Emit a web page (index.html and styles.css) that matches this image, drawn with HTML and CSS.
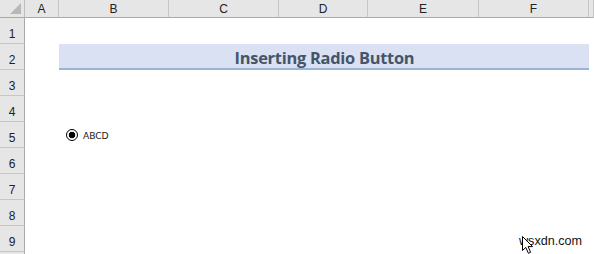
FILE: index.html
```html
<!DOCTYPE html>
<html>
<head>
<meta charset="utf-8">
<link rel="stylesheet" href="styles.css">
</head>
<body>
<div class="sheet">
  <div class="corner"><span class="tri"></span></div>
  <div class="ch">A</div><div class="ch">B</div><div class="ch">C</div><div class="ch">D</div><div class="ch">E</div><div class="ch">F</div><div class="ch last"></div>

  <div class="rh">1</div><div class="c"></div><div class="c"></div><div class="c"></div><div class="c"></div><div class="c"></div><div class="c"></div><div class="c"></div>
  <div class="rh">2</div><div class="c"></div><div class="title">Inserting Radio Button</div><div class="c"></div>
  <div class="rh">3</div><div class="c"></div><div class="c"></div><div class="c"></div><div class="c"></div><div class="c"></div><div class="c"></div><div class="c"></div>
  <div class="rh">4</div><div class="c"></div><div class="c"></div><div class="c"></div><div class="c"></div><div class="c"></div><div class="c"></div><div class="c"></div>
  <div class="rh">5</div><div class="c"></div><div class="c"><div class="radio"><span class="dot"></span><span class="lbl">ABCD</span></div></div><div class="c"></div><div class="c"></div><div class="c"></div><div class="c"></div><div class="c"></div>
  <div class="rh">6</div><div class="c"></div><div class="c"></div><div class="c"></div><div class="c"></div><div class="c"></div><div class="c"></div><div class="c"></div>
  <div class="rh">7</div><div class="c"></div><div class="c"></div><div class="c"></div><div class="c"></div><div class="c"></div><div class="c"></div><div class="c"></div>
  <div class="rh">8</div><div class="c"></div><div class="c"></div><div class="c"></div><div class="c"></div><div class="c"></div><div class="c"></div><div class="c"></div>
  <div class="rh">9</div><div class="c"></div><div class="c"></div><div class="c"></div><div class="c"></div><div class="c"></div><div class="c"></div><div class="c"></div>
  <div class="rh"></div><div class="c"></div><div class="c"></div><div class="c"></div><div class="c"></div><div class="c"></div><div class="c"></div><div class="c"></div>
</div>
<div class="watermark">wsxdn.com</div>
<svg class="cursor" width="14" height="20" viewBox="0 0 14 20">
  <path d="M1.5 1.5 L1.5 15.5 L4.8 12.4 L7.4 18.3 L9.6 17.3 L7.1 11.6 L11.6 11.6 Z" fill="#fff" stroke="#000" stroke-width="1" stroke-linejoin="miter"/>
</svg>
</body>
</html>
```

FILE: styles.css
```css
html, body {
  margin: 0;
  padding: 0;
  background: #fff;
  overflow: hidden;
}
body {
  width: 594px;
  height: 254px;
  position: relative;
  font-family: "Liberation Sans", Arial, sans-serif;
}
.sheet {
  display: grid;
  grid-template-columns: 25px 34px 110px 110px 89px 111px 110px 5px;
  grid-template-rows: 18px repeat(9, 26px) 2px;
  overflow: hidden;
}
.corner {
  background: #e6e6e6;
  border-right: 1px solid #bdbdbd;
  border-bottom: 1px solid #a9a9a9;
  position: relative;
  box-sizing: border-box;
}
.tri {
  position: absolute;
  right: 3px;
  bottom: 3px;
  width: 0;
  height: 0;
  border-left: 11px solid transparent;
  border-bottom: 11px solid #b8b8b8;
}
.ch {
  background: #e6e6e6;
  border-right: 1px solid #c6c6c6;
  border-bottom: 1px solid #a9a9a9;
  box-sizing: border-box;
  display: flex;
  align-items: center;
  justify-content: center;
  font-size: 12px;
  color: #222;
  padding-top: 1px;
}
.rh {
  background: #e6e6e6;
  border-right: 1px solid #a9a9a9;
  border-bottom: 1px solid #c6c6c6;
  box-sizing: border-box;
  display: flex;
  align-items: center;
  justify-content: center;
  font-size: 12px;
  color: #222;
  padding-top: 7px;
}
.c {
  position: relative;
}
.title {
  grid-column: span 5;
  background: #d9e1f2;
  border-bottom: 2px solid #9bb3d6;
  box-sizing: border-box;
  display: flex;
  align-items: center;
  justify-content: center;
  font-family: "Open Sans", sans-serif;
  font-weight: 700;
  font-size: 16.4px;
  letter-spacing: -0.25px;
  color: #44546a;
  padding-top: 2px;
  padding-left: 1px;
}
.radio {
  display: flex;
  align-items: center;
  gap: 5px;
  position: absolute;
  left: 7px;
  top: 7px;
}
.dot {
  width: 10px;
  height: 10px;
  border: 1px solid #000;
  border-radius: 50%;
  background: radial-gradient(circle, #000 0, #000 3px, #fff 3.6px);
}
.lbl {
  font-family: "DejaVu Sans", sans-serif;
  font-size: 9.2px;
  color: #222;
  letter-spacing: -0.1px;
}
.watermark {
  position: absolute;
  left: 519px;
  top: 234px;
  font-size: 12.6px;
  color: #111;
  letter-spacing: 0;
}
.cursor {
  position: absolute;
  left: 521px;
  top: 235px;
}
```
